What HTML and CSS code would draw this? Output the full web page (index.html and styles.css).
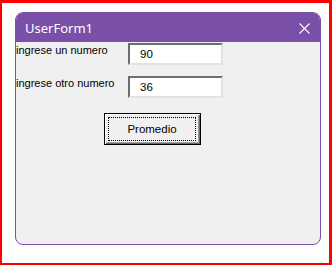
FILE: index.html
```html
<!DOCTYPE html>
<html>
<head>
<meta charset="utf-8">
<link rel="stylesheet" href="styles.css">
</head>
<body>
<div class="frame">
  <div class="window">
    <div class="titlebar">
      <span class="title">UserForm1</span>
      <svg class="close" width="11" height="11" viewBox="0 0 11 11"><path d="M0.5 0.5L10.5 10.5M10.5 0.5L0.5 10.5" stroke="#fff" stroke-width="1.1" fill="none"/></svg>
    </div>
    <div class="content">
      <div class="row">
        <span class="label">ingrese un numero</span>
        <div class="input">90</div>
      </div>
      <div class="row row2">
        <span class="label">ingrese otro numero</span>
        <div class="input">36</div>
      </div>
      <div class="button"><span class="focus">Promedio</span></div>
    </div>
  </div>
</div>
</body>
</html>
```
FILE: styles.css
```css
html, body {
  margin: 0;
  padding: 0;
  background: #fff;
}
.frame {
  box-sizing: border-box;
  width: 332px;
  height: 265px;
  border: 2px solid #f00;
  border-top-width: 3px;
  border-right-width: 3px;
  padding: 9px 0 0 13px;
}
.window {
  box-sizing: border-box;
  width: 306px;
  height: 233px;
  border: 1px solid #7a52a6;
  border-radius: 8px;
  background: #f0f0f0;
  overflow: hidden;
}
.titlebar {
  height: 29px;
  background: #7a4fa8;
  display: flex;
  align-items: center;
  justify-content: space-between;
  padding: 0 10px 0 9px;
}
.title {
  color: #fff;
  font-family: "Noto Sans", sans-serif;
  font-size: 13px;
}
.close {
  display: block;
  margin-top: 1px;
}
.content {
  padding-top: 1px;
  font-family: "Liberation Sans", Arial, sans-serif;
  font-size: 11px;
  color: #000;
}
.row {
  display: flex;
  align-items: flex-start;
}
.row2 {
  margin-top: 11px;
}
.label {
  width: 112px;
  line-height: 13px;
  padding-top: 1px;
}
.input {
  box-sizing: border-box;
  width: 95px;
  height: 22px;
  background: #fff;
  border: 2px solid;
  border-color: #6d6d6d #e3e3e3 #e3e3e3 #6d6d6d;
  padding-left: 10px;
  line-height: 18px;
  font-size: 11.5px;
}
.button {
  box-sizing: border-box;
  margin: 15px 0 0 88px;
  width: 97px;
  height: 32px;
  border: 1px solid #000;
  box-shadow: inset 1px 1px 0 #fff, inset -1px -1px 0 #696969, inset -2px -2px 0 #a0a0a0;
  background: #f0f0f0;
  padding: 3px 4px 3px 3px;
  display: flex;
}
.focus {
  flex: 1;
  border: 1px dotted #000;
  display: flex;
  align-items: center;
  justify-content: center;
  font-size: 11.5px;
}
```
